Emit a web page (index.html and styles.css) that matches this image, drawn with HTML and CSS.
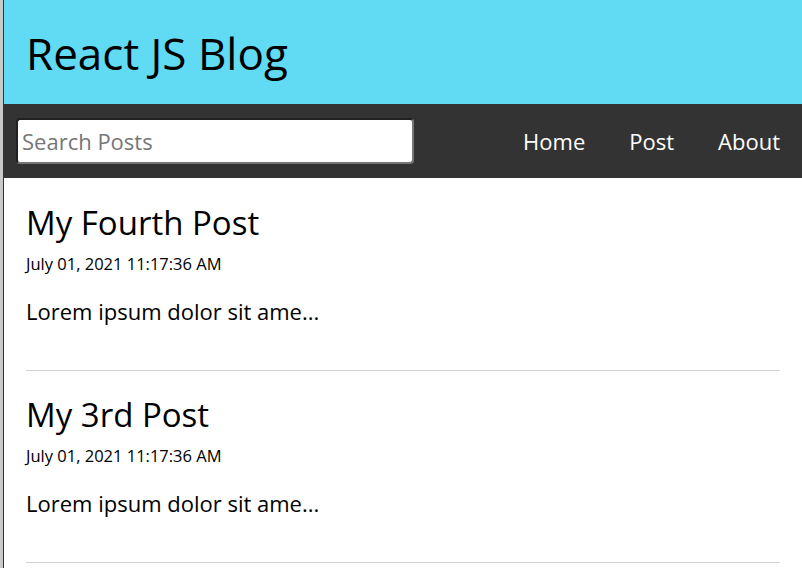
FILE: index.html
```
<!DOCTYPE html>
<html lang="en">
<head>
<meta charset="utf-8">
<title>React JS Blog</title>
<link rel="stylesheet" href="styles.css">
</head>
<body>
<div class="app">
  <header class="header">
    <h1 class="header-title">React JS Blog</h1>
  </header>
  <nav class="nav">
    <form class="search-form">
      <input class="search-input" type="text" placeholder="Search Posts">
    </form>
    <ul class="nav-list">
      <li class="nav-item">Home</li>
      <li class="nav-item">Post</li>
      <li class="nav-item">About</li>
    </ul>
  </nav>
  <main class="main">
    <article class="post">
      <h2 class="post-title">My Fourth Post</h2>
      <p class="post-date">July 01, 2021 11:17:36 AM</p>
      <p class="post-body">Lorem ipsum dolor sit ame...</p>
    </article>
    <article class="post">
      <h2 class="post-title">My 3rd Post</h2>
      <p class="post-date">July 01, 2021 11:17:36 AM</p>
      <p class="post-body">Lorem ipsum dolor sit ame...</p>
    </article>
  </main>
</div>
</body>
</html>
```
FILE: styles.css
```
* { box-sizing: border-box; }
html, body { margin: 0; padding: 0; }
body {
  background: #c9c9c9;
  padding-left: 3px;
  font-family: "Open Sans", "DejaVu Sans", sans-serif;
  color: #000;
  overflow: hidden;
}
.app {
  background: #fff;
  border-left: 1px solid #333;
  min-height: 100vh;
}
.header {
  background: #61daf3;
  height: 104px;
  padding: 23px 22px 21px;
}
.header-title {
  margin: 0;
  font-size: 44px;
  font-weight: 400;
  line-height: 60px;
}
.nav {
  background: #333;
  height: 74px;
  display: flex;
  align-items: center;
  justify-content: space-between;
  padding-left: 12px;
}
.search-form { margin: 0; }
.search-input {
  display: block;
  width: 398px;
  height: 46px;
  font-family: "Open Sans", sans-serif;
  font-size: 22px;
  padding: 0 4px;
  border: 2px inset #767676;
  border-radius: 4px;
  outline: none;
  background: #fff;
  color: #000;
}
.search-input::placeholder { color: #767676; }
.nav-list {
  display: flex;
  list-style: none;
  margin: 0;
  padding: 0;
  color: #fff;
}
.nav-item {
  font-size: 22px;
  line-height: 30px;
  padding: 0 22px;
}
.main { padding-top: 1px; }
.post {
  margin: 0 22px;
  padding: 21px 0 44px;
  border-bottom: 1px solid #d3d3d3;
}
.post-title {
  margin: 0;
  font-size: 33px;
  font-weight: 400;
  line-height: 45px;
}
.post-date {
  margin: 8px 0 0;
  font-size: 16.5px;
  line-height: 21px;
}
.post-body {
  margin: 22px 0 0;
  font-size: 22px;
  line-height: 30px;
}
```
